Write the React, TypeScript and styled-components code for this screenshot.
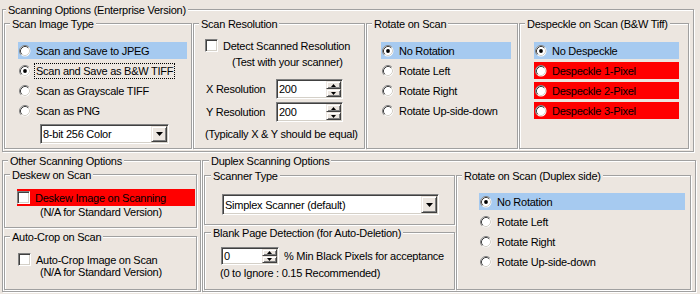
import React from "react";
import styled, { createGlobalStyle } from "styled-components";

const BG = "#ece6e0";

const GlobalStyle = createGlobalStyle`
  html, body {
    margin: 0;
    padding: 0;
    background: ${BG};
  }
  body {
    font-family: "Liberation Sans", Arial, sans-serif;
    font-size: 11px;
    letter-spacing: -0.25px;
    color: #000;
  }
`;

type GroupProps = {
  title: string;
  w: number;
  h: number;
  pad: string;
  indent?: number;
  children?: React.ReactNode;
};

const Group = (props: GroupProps) => {
  const { title, w, h, pad, indent = 5, children } = { ...props };
  return (
    <Frame $w={w} $h={h} $pad={pad}>
      <Legend $x={indent}>{title}</Legend>
      {children}
    </Frame>
  );
};

const Radio = ({ on }: { on?: boolean }) => (
  <svg width="12" height="12" viewBox="0 0 12 12" style={{ flex: "none" }}>
    <circle cx="6" cy="6" r="5.5" fill="#fff" />
    <path d="M2.11 9.89 A5.5 5.5 0 0 1 9.89 2.11" stroke="#808080" fill="none" />
    <path d="M2.82 9.18 A4.5 4.5 0 0 1 9.18 2.82" stroke="#404040" fill="none" />
    <path d="M9.18 2.82 A4.5 4.5 0 0 1 2.82 9.18" stroke="#d4d0c8" fill="none" />
    {on && <circle cx="6" cy="6" r="1.9" fill="#000" />}
  </svg>
);

const Arrow = ({ up, small }: { up?: boolean; small?: boolean }) => {
  const w = small ? 5 : 7;
  const h = small ? 3 : 4;
  const d = up ? `M0 ${h} L${w / 2} 0 L${w} ${h} Z` : `M0 0 L${w} 0 L${w / 2} ${h} Z`;
  return (
    <svg width={w} height={h} viewBox={`0 0 ${w} ${h}`}>
      <path d={d} fill="#000" />
    </svg>
  );
};

type OptionItem = { label: string; on?: boolean; tone?: "sel" | "warn"; focus?: boolean };

const Options = ({ items }: { items: OptionItem[] }) => (
  <OptionList>
    {items.map(item => (
      <Option key={item.label} $tone={item.tone}>
        <Radio on={item.on} />
        <OptionText $focus={item.focus}>{item.label}</OptionText>
      </Option>
    ))}
  </OptionList>
);

const Combo = ({ w, h, value }: { w: number; h: number; value: string }) => (
  <Field $w={w} $h={h}>
    <Value>{value}</Value>
    <DropButton>
      <Arrow />
    </DropButton>
  </Field>
);

const Spin = ({ w, h, value }: { w: number; h: number; value: string }) => (
  <Field $w={w} $h={h}>
    <Value>{value}</Value>
    <SpinButtons>
      <SpinButton>
        <Arrow up small />
      </SpinButton>
      <SpinButton>
        <Arrow small />
      </SpinButton>
    </SpinButtons>
  </Field>
);

const rotations: OptionItem[] = [
  { label: "No Rotation", on: true, tone: "sel" },
  { label: "Rotate Left" },
  { label: "Rotate Right" },
  { label: "Rotate Up-side-down" },
];

const App = () => {
  return (
    <Dialog>
      <GlobalStyle />
      <Group title="Scanning Options (Enterprise Version)" w={692} h={143} pad="13px 3px 2px 1px" indent={3}>
        <TopGrid>
          <Group title="Scan Image Type" w={188} h={126} pad="18px 4px 0 13px">
            <Options
              items={[
                { label: "Scan and Save to JPEG", tone: "sel" },
                { label: "Scan and Save as B&W TIFF", on: true, focus: true },
                { label: "Scan as Grayscale TIFF" },
                { label: "Scan as PNG" },
              ]}
            />
            <ComboSlot $left={22} $top={5}>
              <Combo w={129} h={20} value="8-bit 256 Color" />
            </ComboSlot>
          </Group>

          <Group title="Scan Resolution" w={172} h={126} pad="15px 0 0 11px">
            <CheckRow>
              <Check />
              <span>Detect Scanned Resolution</span>
            </CheckRow>
            <Note $left={27} $top={4}>(Test with your scanner)</Note>
            <SpinRow $top={10}>
              <FieldLabel>X Resolution</FieldLabel>
              <Spin w={67} h={20} value="200" />
            </SpinRow>
            <SpinRow $top={3}>
              <FieldLabel>Y Resolution</FieldLabel>
              <Spin w={67} h={20} value="200" />
            </SpinRow>
            <Note $left={0} $top={6}>(Typically X &amp; Y should be equal)</Note>
          </Group>

          <Group title="Rotate on Scan" w={152} h={126} pad="18px 6px 0 14px">
            <Options items={rotations} />
          </Group>

          <Group title="Despeckle on Scan (B&W Tiff)" w={170} h={126} pad="18px 9px 0 14px">
            <Options
              items={[
                { label: "No Despeckle", on: true, tone: "sel" },
                { label: "Despeckle 1-Pixel", tone: "warn" },
                { label: "Despeckle 2-Pixel", tone: "warn" },
                { label: "Despeckle 3-Pixel", tone: "warn" },
              ]}
            />
          </Group>
        </TopGrid>
      </Group>

      <BottomRow>
        <Group title="Other Scanning Options" w={199} h={132} pad="13px 1px 1px 1px">
          <Group title="Deskew on Scan" w={193} h={54} pad="14px 1px 0 12px">
            <CheckRow $band>
              <Check />
              <span>Deskew Image on Scanning</span>
            </CheckRow>
            <Note $left={23} $top={0}>(N/A for Standard Version)</Note>
          </Group>
          <Spacer $h={8} />
          <Group title="Auto-Crop on Scan" w={193} h={54} pad="16px 0 0 13px">
            <CheckRow>
              <Check />
              <span>Auto-Crop Image on Scan</span>
            </CheckRow>
            <Note $left={22} $top={0}>(N/A for Standard Version)</Note>
          </Group>
        </Group>

        <Group title="Duplex Scanning Options" w={494} h={132} pad="14px 1px 1px 1px" indent={6}>
          <DuplexRow>
            <Column>
              <Group title="Scanner Type" w={251} h={50} pad="18px 0 0 17px" indent={6}>
                <Combo w={217} h={21} value="Simplex Scanner (default)" />
              </Group>
              <Spacer $h={7} />
              <Group title="Blank Page Detection (for Auto-Deletion)" w={251} h={58} pad="14px 0 0 16px" indent={6}>
                <SpinRow $top={0}>
                  <Spin w={58} h={18} value="0" />
                  <PixelsLabel>% Min Black Pixels for acceptance</PixelsLabel>
                </SpinRow>
                <Note $left={-1} $top={2}>(0 to Ignore : 0.15 Recommended)</Note>
              </Group>
            </Column>
            <Group title="Rotate on Scan (Duplex side)" w={235} h={115} pad="17px 5px 0 22px">
              <Options items={rotations} />
            </Group>
          </DuplexRow>
        </Group>
      </BottomRow>
    </Dialog>
  );
};

export default App;

const Dialog = styled.div`
  width: 700px;
  height: 294px;
  box-sizing: border-box;
  padding: 9px 0 0 2px;
  background: ${BG};
  overflow: hidden;
`;

const Frame = styled.div<{ $w: number; $h: number; $pad: string }>`
  position: relative;
  box-sizing: border-box;
  flex: none;
  width: ${p => p.$w}px;
  height: ${p => p.$h}px;
  padding: ${p => p.$pad};
  border: 1px solid #a0a0a0;
  box-shadow: inset 1px 1px 0 #fff, 1px 1px 0 #fff;
`;

const Legend = styled.span<{ $x: number }>`
  position: absolute;
  top: -6px;
  left: ${p => p.$x}px;
  padding: 0 2px;
  background: ${BG};
  line-height: 13px;
  white-space: nowrap;
`;

const TopGrid = styled.div`
  display: grid;
  grid-template-columns: 188px 172px 152px 170px;
  column-gap: 1px;
`;

const BottomRow = styled.div`
  display: flex;
  gap: 1px;
  margin-top: 8px;
`;

const DuplexRow = styled.div`
  display: flex;
  gap: 1px;
`;

const Column = styled.div`
  display: flex;
  flex-direction: column;
`;

const Spacer = styled.div<{ $h: number }>`
  height: ${p => p.$h}px;
`;

const OptionList = styled.div`
  display: flex;
  flex-direction: column;
  gap: 3px;
`;

const Option = styled.div<{ $tone?: "sel" | "warn" }>`
  display: flex;
  align-items: center;
  gap: 5px;
  height: 17px;
  padding-left: 1px;
  background: ${p => (p.$tone === "sel" ? "#a6caf0" : p.$tone === "warn" ? "#ff0000" : "transparent")};
  white-space: nowrap;
`;

const OptionText = styled.span<{ $focus?: boolean }>`
  line-height: 14px;
  padding: 0 1px;
  margin-left: -1px;
  outline: ${p => (p.$focus ? "1px dotted #000" : "none")};
`;

const CheckRow = styled.div<{ $band?: boolean }>`
  display: flex;
  align-items: center;
  gap: 5px;
  height: ${p => (p.$band ? 17 : 13)}px;
  background: ${p => (p.$band ? "#ff0000" : "transparent")};
  white-space: nowrap;
`;

const Check = styled.span`
  box-sizing: border-box;
  flex: none;
  width: 13px;
  height: 13px;
  background: #fff;
  border: 1px solid;
  border-color: #808080 #fff #fff #808080;
  box-shadow: inset 1px 1px 0 #404040, inset -1px -1px 0 #d4d0c8;
`;

const Note = styled.div<{ $left: number; $top: number }>`
  margin-left: ${p => p.$left}px;
  margin-top: ${p => p.$top}px;
  line-height: 13px;
  white-space: nowrap;
`;

const SpinRow = styled.div<{ $top: number }>`
  display: flex;
  align-items: center;
  margin-top: ${p => p.$top}px;
`;

const FieldLabel = styled.span`
  width: 70px;
  margin-left: 1px;
  white-space: nowrap;
`;

const PixelsLabel = styled.span`
  margin-left: 5px;
  white-space: nowrap;
`;

const ComboSlot = styled.div<{ $left: number; $top: number }>`
  margin-left: ${p => p.$left}px;
  margin-top: ${p => p.$top}px;
`;

const Field = styled.div<{ $w: number; $h: number }>`
  box-sizing: border-box;
  display: flex;
  width: ${p => p.$w}px;
  height: ${p => p.$h}px;
  background: #fff;
  border: 1px solid;
  border-color: #808080 #fff #fff #808080;
  box-shadow: inset 1px 1px 0 #404040, inset -1px -1px 0 #d4d0c8;
  padding: 1px;
`;

const Value = styled.span`
  flex: 1;
  display: flex;
  align-items: center;
  padding-left: 1px;
  white-space: nowrap;
  overflow: hidden;
`;

const DropButton = styled.div`
  box-sizing: border-box;
  width: 16px;
  display: flex;
  align-items: center;
  justify-content: center;
  background: ${BG};
  border: 1px solid;
  border-color: ${BG} #404040 #404040 ${BG};
  box-shadow: inset 1px 1px 0 #fff, inset -1px -1px 0 #808080;
`;

const SpinButtons = styled.div`
  width: 15px;
  display: flex;
  flex-direction: column;
`;

const SpinButton = styled.div`
  box-sizing: border-box;
  flex: 1;
  display: flex;
  align-items: center;
  justify-content: center;
  background: ${BG};
  border: 1px solid;
  border-color: ${BG} #404040 #404040 ${BG};
  box-shadow: inset 1px 1px 0 #fff, inset -1px -1px 0 #808080;
`;
